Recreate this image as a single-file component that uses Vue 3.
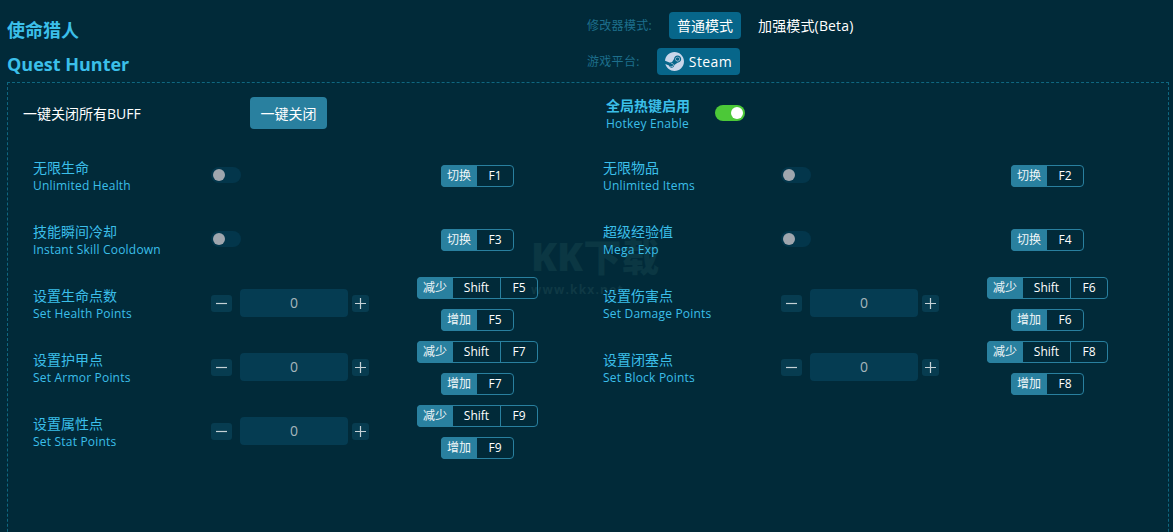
<script setup>
const keyDec = (k) => [{ tag: '减少', keys: ['Shift', k] }];
const items = [
  { zh: '无限生命', en: 'Unlimited Health', type: 'toggle', hk: [{ tag: '切换', keys: ['F1'] }] },
  { zh: '无限物品', en: 'Unlimited Items', type: 'toggle', hk: [{ tag: '切换', keys: ['F2'] }] },
  { zh: '技能瞬间冷却', en: 'Instant Skill Cooldown', type: 'toggle', hk: [{ tag: '切换', keys: ['F3'] }] },
  { zh: '超级经验值', en: 'Mega Exp', type: 'toggle', hk: [{ tag: '切换', keys: ['F4'] }] },
  { zh: '设置生命点数', en: 'Set Health Points', type: 'num', hk: [...keyDec('F5'), { tag: '增加', keys: ['F5'] }] },
  { zh: '设置伤害点', en: 'Set Damage Points', type: 'num', hk: [...keyDec('F6'), { tag: '增加', keys: ['F6'] }] },
  { zh: '设置护甲点', en: 'Set Armor Points', type: 'num', hk: [...keyDec('F7'), { tag: '增加', keys: ['F7'] }] },
  { zh: '设置闭塞点', en: 'Set Block Points', type: 'num', hk: [...keyDec('F8'), { tag: '增加', keys: ['F8'] }] },
  { zh: '设置属性点', en: 'Set Stat Points', type: 'num', hk: [...keyDec('F9'), { tag: '增加', keys: ['F9'] }] },
];
</script>

<template>
  <div class="page">
    <header class="head">
      <div class="titles">
        <h1>使命猎人</h1>
        <h1>Quest Hunter</h1>
      </div>
      <div class="modes">
        <div class="mode-row">
          <span class="mode-label">修改器模式:</span>
          <span class="pill first">普通模式</span>
          <span class="plain">加强模式(Beta)</span>
        </div>
        <div class="mode-row second">
          <span class="mode-label">游戏平台:</span>
          <span class="pill steam">
            <svg viewBox="0 0 24 24" width="19" height="19"><path fill="#c9d6ea" d="M11.979 0C5.678 0 .511 4.86.022 11.037l6.432 2.658c.545-.371 1.203-.59 1.912-.59.063 0 .125.004.188.006l2.861-4.142V8.91c0-2.495 2.028-4.524 4.524-4.524 2.494 0 4.524 2.031 4.524 4.527s-2.03 4.525-4.524 4.525h-.105l-4.076 2.911c0 .052.004.105.004.159 0 1.875-1.515 3.396-3.39 3.396-1.635 0-3.016-1.173-3.331-2.727L.436 15.27C1.862 20.307 6.486 24 11.979 24c6.627 0 11.999-5.373 11.999-12S18.605 0 11.979 0zM7.54 18.21l-1.473-.61c.262.543.714.999 1.314 1.25 1.297.539 2.793-.076 3.332-1.375.263-.63.264-1.319.005-1.949s-.75-1.121-1.377-1.383c-.624-.26-1.29-.249-1.878-.03l1.523.63c.956.4 1.409 1.5 1.009 2.455-.397.957-1.497 1.41-2.454 1.012H7.54zm11.415-9.303c0-1.662-1.353-3.015-3.015-3.015-1.665 0-3.015 1.353-3.015 3.015 0 1.665 1.35 3.015 3.015 3.015 1.663 0 3.015-1.35 3.015-3.015zm-5.273-.005c0-1.252 1.013-2.266 2.265-2.266 1.249 0 2.266 1.014 2.266 2.266 0 1.251-1.017 2.265-2.266 2.265-1.253 0-2.265-1.014-2.265-2.265z"/></svg>
            <span class="steam-text">Steam</span>
          </span>
        </div>
      </div>
    </header>

    <section class="panel">
      <div class="mark">
        <div class="mark-big">KK下载</div>
        <div class="mark-url">www.kkx.net</div>
      </div>

      <div class="top">
        <div class="top-left">
          <span class="all">一键关闭所有BUFF</span>
          <button class="off-btn">一键关闭</button>
        </div>
        <div class="top-right">
          <div class="hot">
            <b>全局热键启用</b>
            <span>Hotkey Enable</span>
          </div>
          <span class="sw on"><i></i></span>
        </div>
      </div>

      <div class="grid">
        <div v-for="it in items" :key="it.en" class="item">
          <div class="label">
            <span class="zh">{{ it.zh }}</span>
            <span class="en">{{ it.en }}</span>
          </div>
          <div class="ctrl">
            <span v-if="it.type === 'toggle'" class="sw"><i></i></span>
            <div v-else class="stepper">
              <span class="step minus"><svg width="11" height="11" viewBox="0 0 11 11"><path d="M0 5.5h11" stroke="#c5d1d6" stroke-width="1.2"/></svg></span>
              <span class="num">0</span>
              <span class="step plus"><svg width="11" height="11" viewBox="0 0 11 11"><path d="M0 5.5h11M5.5 0v11" stroke="#c5d1d6" stroke-width="1.2"/></svg></span>
            </div>
          </div>
          <div class="hks">
            <div v-for="h in it.hk" :key="h.tag" class="hk">
              <span class="tag">{{ h.tag }}</span>
              <span v-for="k in h.keys" :key="k" class="key" :class="{ shift: k === 'Shift' }">{{ k }}</span>
            </div>
          </div>
        </div>
      </div>
    </section>
  </div>
</template>

<style>
html, body { margin: 0; background: #012a39; overflow: hidden; }
</style>

<style scoped>
.page {
  width: 1173px;
  height: 532px;
  overflow: hidden;
  background: #012a39;
  font-family: "Open Sans", "Noto Sans CJK SC", sans-serif;
  color: #fff;
}
.head { display: flex; height: 82px; box-sizing: border-box; padding-left: 7px; }
.titles { width: 580px; }
h1 {
  margin: 0;
  font-size: 18px;
  line-height: 24px;
  font-weight: 700;
  color: #3bbfe9;
}
h1:first-child { padding-top: 18px; }
h1 + h1 { margin-top: 10px; }
.mode-row { display: flex; align-items: center; height: 27px; margin-top: 12px; }
.mode-row.second { margin-top: 9px; }
.mode-label { width: 82px; font-size: 12px; letter-spacing: 0.3px; color: #1d6f8c; white-space: nowrap; padding-bottom: 1px; }
.second .mode-label { width: 70px; }
.pill {
  display: flex;
  align-items: center;
  justify-content: center;
  box-sizing: border-box;
  height: 27px;
  background: #07668a;
  border-radius: 4px;
  font-size: 14px;
  color: #fff;
}
.first { width: 72px; padding-bottom: 1px; }
.steam { width: 83px; gap: 5px; }
.steam-text { letter-spacing: 0.4px; }
.plain { margin-left: 17px; font-size: 14px; letter-spacing: 0.15px; padding-bottom: 1px; }
.panel {
  position: relative;
  box-sizing: border-box;
  width: 1162px;
  margin-left: 7px;
  height: 500px;
  border: 1px dashed #0f6780;
}
.top { position: relative; display: flex; height: 61px; }
.top-left { width: 583px; display: flex; align-items: center; padding: 0 0 2px 15px; box-sizing: border-box; }
.all { width: 227px; font-size: 14px; }
.off-btn {
  width: 77px;
  height: 32px;
  border: 0;
  border-radius: 4px;
  background: #29809f;
  color: #fff;
  font: inherit;
  font-size: 14px;
  padding: 0;
}
.top-right { display: flex; align-items: center; padding: 0 0 2px 15px; box-sizing: border-box; }
.hot { width: 109px; padding-top: 4px; display: flex; flex-direction: column; color: #3bbfe9; }
.hot b { font-size: 14px; line-height: 18px; font-weight: 700; }
.hot span { font-size: 12px; line-height: 18px; letter-spacing: 0.2px; }
.grid {
  position: relative;
  display: grid;
  grid-template-columns: 570px 570px;
  grid-auto-rows: 64px;
  padding-left: 25px;
}
.item { display: flex; align-items: center; }
.label { width: 178px; display: flex; flex-direction: column; color: #3bbfe9; }
.zh { font-size: 14px; line-height: 18px; }
.en { font-size: 12px; line-height: 17px; letter-spacing: 0.2px; }
.ctrl { width: 158px; display: flex; align-items: center; padding-bottom: 2px; }
.sw {
  position: relative;
  display: block;
  width: 30px;
  height: 16px;
  border-radius: 8px;
  background: #03364b;
}
.sw i {
  position: absolute;
  left: 2px;
  top: 2px;
  width: 12px;
  height: 12px;
  border-radius: 50%;
  background: #9fa6ae;
}
.sw.on { background: #4cc838; }
.sw.on i { left: 16px; background: #fff; }
.stepper { display: flex; align-items: center; width: 158px; }
.step {
  display: flex;
  align-items: center;
  justify-content: center;
  height: 17px;
  background: #073c50;
  border-radius: 3px;
}
.minus { width: 21px; }
.plus { width: 17px; }
.num {
  width: 108px;
  height: 28px;
  margin: 0 4px 0 8px;
  border-radius: 4px;
  background: #053c52;
  color: #a6b6bc;
  font-size: 14px;
  line-height: 28px;
  text-align: center;
}
.hks { width: 217px; display: flex; flex-direction: column; align-items: center; gap: 10px; }
.hk {
  display: flex;
  height: 22px;
  box-sizing: border-box;
  border: 1px solid #29809f;
  border-radius: 4px;
  font-size: 12px;
  line-height: 20px;
}
.tag {
  width: 36px;
  margin: -1px 0 -1px -1px;
  background: #29809f;
  border-radius: 4px 0 0 4px;
  font-size: 12px;
  line-height: 21px;
  text-align: center;
  color: #f0f6f8;
}
.key { width: 36px; text-align: center; font-weight: 500; }
.key.shift { width: 48px; border-right: 1px solid #29809f; box-sizing: border-box; }
.mark { position: absolute; left: 523px; top: 154px; width: 125px; pointer-events: none; }
.mark-big { font-size: 38px; line-height: 38px; font-weight: 800; color: #0b3743; white-space: nowrap; }
.mark-url { font-size: 12px; line-height: 16px; font-weight: 700; letter-spacing: 1.2px; color: #0f3945; white-space: nowrap; margin-top: 7px; }
</style>
